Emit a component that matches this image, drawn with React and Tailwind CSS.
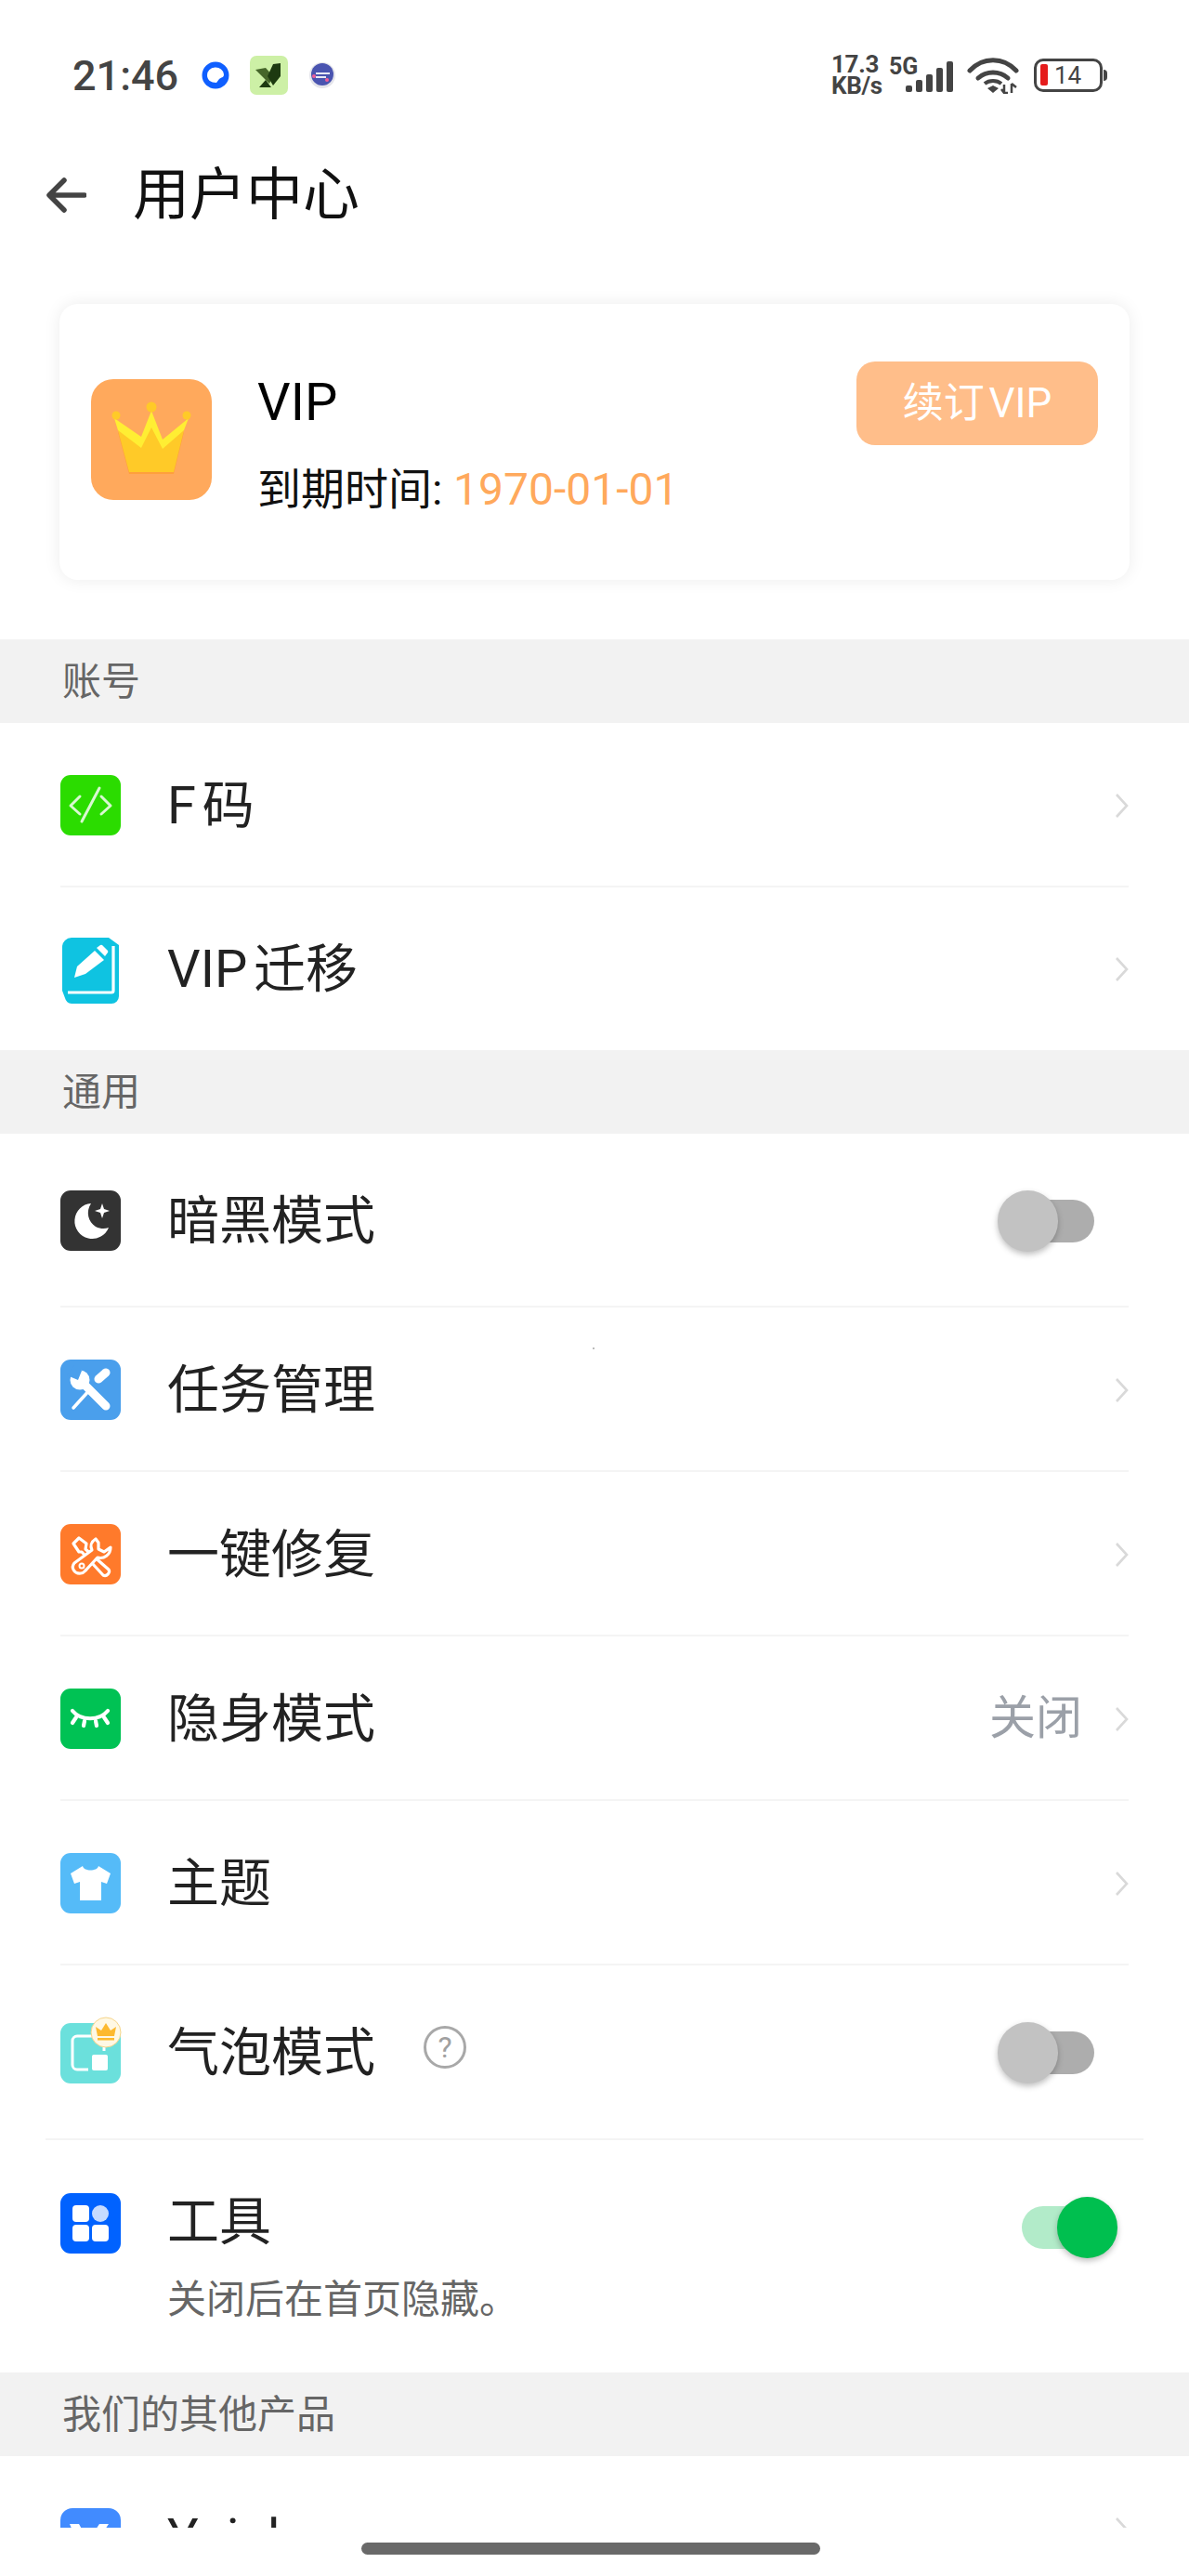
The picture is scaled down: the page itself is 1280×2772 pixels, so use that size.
import React from 'react';

const FONT = 'font-["Roboto","Noto_Sans_CJK_SC",sans-serif]';

const Chevron = () => (
    <svg width="15" height="30" viewBox="0 0 15 30" fill="none" className="shrink-0">
        <path d="M2 3l11 12L2 27" stroke="#d9d9d9" strokeWidth="2.6" />
    </svg>
);

const Toggle = ({ on }) => (
    <div className="relative w-[130px] h-[66px] shrink-0">
        {on ? (
            <>
                <div className="absolute left-[1px] top-[10px] w-[90px] h-[46px] rounded-full bg-[#b2ebc9]" />
                <div className="absolute left-[39px] top-0 w-[65px] h-[66px] rounded-full bg-[#00bf4f] shadow-[0_3px_6px_rgba(0,0,0,0.25)]" />
            </>
        ) : (
            <>
                <div className="absolute left-[24px] top-[10px] w-[80px] h-[46px] rounded-full bg-[#adadad]" />
                <div className="absolute left-0 top-0 w-[65px] h-[66px] rounded-full bg-[#c2c2c2] shadow-[0_3px_6px_rgba(0,0,0,0.25)]" />
            </>
        )}
    </div>
);

const Tile = ({ color, children }) => (
    <svg width="65" height="65" viewBox="0 0 65 65" className="shrink-0">
        <rect width="65" height="65" rx="11" fill={color} />
        {children}
    </svg>
);

const CodeIcon = () => (
    <Tile color="#2bdc00">
        <path d="M21 23L11 33l10 9M44 23l10 10-10 9M42 14L23 50" fill="none" stroke="#d8f8d0" strokeWidth="3" strokeLinecap="round" strokeLinejoin="round" />
    </Tile>
);

const BookIcon = () => (
    <svg width="65" height="71" viewBox="0 0 65 71" className="shrink-0 mt-[4px]">
        <path d="M12 0h40l11 8v55a8 8 0 0 1-8 8H12a8 8 0 0 1-7-6l-3-8V10A10 10 0 0 1 12 0z" fill="#0fc3e1" />
        <path d="M57 9v48a2 2 0 0 1-2 2H8" fill="none" stroke="#fff" strokeWidth="3.2" />
        <path d="M15 43l3-12 19-17 10 10-20 15z" fill="#fff" />
        <path d="M39 11l4-3a2 2 0 0 1 2 0l6 6a2 2 0 0 1 0 2l-3 4z" fill="#fff" />
    </svg>
);

const MoonIcon = () => (
    <Tile color="#333333">
        <path d="M33 14a19 19 0 1 0 19 26c-4 1.500-9 1.500-14-1-8-5-11-16-5-25z" fill="#fff" />
        <path d="M45 14l2 6 6 2-6 2-2 6-2-6-6-2 6-2z" fill="#fff" />
    </Tile>
);

const WrenchBlueIcon = () => (
    <Tile color="#4a9fec">
        <path d="M25 26L49 50" stroke="#fff" strokeWidth="9" strokeLinecap="round" />
        <circle cx="21" cy="22" r="10.500" fill="#fff" />
        <path d="M7 17l12 5 4-10-7-7z" fill="#4a9fec" />
        <path d="M41 21L49 14" stroke="#fff" strokeWidth="9" strokeLinecap="round" />
        <path d="M33 31L14 52" stroke="#fff" strokeWidth="3.500" strokeLinecap="round" />
    </Tile>
);

const RepairIcon = () => (
    <Tile color="#ff7a2b">
        <g fill="none" stroke="#fff" strokeWidth="3.2" strokeLinejoin="round">
            <path d="M14 21l6-6 8 6-1 6 25 22c2 3-2 8-6 6L23 30l-3 0z" />
            <path d="M38 16c-5 3-6 8-4 12L15 42c-4 5 0 12 7 11 3 0 4-2 6-4l12-13c7 2 14-3 14-11l-7 5-6-3v-7z" fill="#ff7a2b" />
            <circle cx="23" cy="45" r="2.500" strokeWidth="2" />
        </g>
    </Tile>
);

const EyeIcon = () => (
    <Tile color="#00c254">
        <g fill="none" stroke="#fff" strokeWidth="4.200" strokeLinecap="round">
            <path d="M13 24c9 11 29 11 38 0" />
            <path d="M13 37l4-6M25 40l1-5M39 40l-1-5M51 37l-4-6" />
        </g>
    </Tile>
);

const ShirtIcon = () => (
    <Tile color="#55bbf8">
        <path d="M24 14l-13 8 4 11 6-2v20h23V31l6 2 4-11-13-8c-1 6-16 6-17 0z" fill="#fff" />
    </Tile>
);

const BubbleIcon = () => (
    <div className="relative w-[65px] h-[65px] shrink-0">
        <svg width="65" height="65" viewBox="0 0 65 65">
            <rect width="65" height="65" rx="11" fill="#6be0dc" />
            <path d="M36 14H18a5 5 0 0 0-5 5v26a5 5 0 0 0 5 5h12" fill="none" stroke="#fff" strokeWidth="3" />
            <rect x="34" y="34" width="17" height="17" rx="2" fill="#fff" />
            <path d="M47 24v6" stroke="#fff" strokeWidth="3" />
        </svg>
        <svg width="34" height="34" viewBox="0 0 34 34" className="absolute left-[32px] top-[-7px]">
            <circle cx="17" cy="17" r="16" fill="#fff8e4" stroke="#f6d58a" strokeWidth="1" />
            <path d="M8 21L6 11l6 4 5-8 5 8 6-4-2 10z" fill="#fdb92f" />
            <rect x="8" y="23" width="18" height="2.500" fill="#fdb92f" />
        </svg>
    </div>
);

const AppsIcon = () => (
    <Tile color="#0062ff">
        <rect x="13" y="13" width="18" height="18" rx="4" fill="#fff" />
        <circle cx="43" cy="22" r="9" fill="#c6dbff" />
        <rect x="13" y="34" width="18" height="18" rx="4" fill="#fff" />
        <rect x="34" y="34" width="18" height="18" rx="4" fill="#fff" />
    </Tile>
);

const YoinkIcon = () => (
    <svg width="65" height="65" viewBox="0 0 65 65" className="shrink-0">
        <rect width="65" height="65" rx="13" fill="#418bff" />
        <path d="M10 17h10l10 18 12-18h10L30 50h-6z" fill="#fff" />
    </svg>
);

const CrownIcon = () => (
    <svg width="130" height="130" viewBox="0 0 130 130" className="shrink-0 -mt-[5px]">
        <rect width="130" height="130" rx="24" fill="#ffa95c" />
        <path d="M29 57l12 45h48l11-45-23 18-12-23-11 22z" fill="#ffa03c" />
        <path d="M29 55l12 45h48l11-45-23 18-12-23-11 22z" fill="#ffca28" />
        <path d="M25 42l29 20 11-28 12 31 28-23-5 13-23 20-12-23-11 22-25-19z" fill="#ffee33" />
        <circle cx="65" cy="30" r="5.500" fill="#ffca28" />
        <circle cx="27" cy="39" r="4.500" fill="#ffca28" />
        <circle cx="103" cy="39" r="4.500" fill="#ffca28" />
    </svg>
);

const StatusBar = () => (
    <div className="h-[162px] flex items-center pl-[78px] pr-[93px] text-[#444]">
        <span className="text-[45px] leading-none w-[133px] font-medium">21:46</span>
        <svg width="41" height="42" viewBox="0 0 41 42" className="shrink-0">
            <circle cx="21" cy="21" r="14.500" fill="#0f5fff" />
            <path d="M12 21a9 8 0 0 1 18-1c0 4-3 3-5 5l-3 4c-6 0-10-3-10-8z" fill="#fff" />
        </svg>
        <svg width="41" height="42" viewBox="0 0 41 42" className="shrink-0 ml-[17px]">
            <rect width="41" height="42" rx="7" fill="#cdf0a6" />
            <path d="M6 15l11-2 8 9-4 8z" fill="#46662a" />
            <path d="M25 9l8-1v14l-8 10-6-10z" fill="#1d3a10" />
            <path d="M10 34l7-8 6 8z" fill="#1d3a10" />
        </svg>
        <svg width="41" height="42" viewBox="0 0 41 42" className="shrink-0 ml-[17px]">
            <circle cx="20" cy="21" r="14" fill="#e4e4ea" />
            <circle cx="20" cy="20" r="12" fill="#4a54b0" />
            <path d="M13 19h15M13 23h11" stroke="#e9e9f5" strokeWidth="1.800" />
            <circle cx="11" cy="22" r="2" fill="#ee5d9a" />
            <circle cx="25" cy="26" r="2" fill="#ee5d9a" />
        </svg>
        <div className="ml-auto flex items-center">
            <div className="text-[26px] leading-[23px] font-bold w-[62px] tracking-[-0.3px]">
                <div>17.3</div>
                <div>KB/s</div>
            </div>
            <div className="relative w-[71px] h-[40px] shrink-0">
                <span className="absolute left-0 top-[1px] text-[25px] leading-[20px] font-bold">5G</span>
                <svg width="71" height="40" viewBox="0 0 71 40" className="absolute left-0 top-0">
                    <rect x="18" y="31" width="7" height="7" rx="2" fill="#444" />
                    <rect x="29" y="25" width="7" height="13" rx="2" fill="#444" />
                    <rect x="40" y="19" width="7" height="19" rx="2" fill="#444" />
                    <rect x="51" y="12" width="7" height="26" rx="2" fill="#444" />
                    <rect x="62" y="5" width="7" height="33" rx="2" fill="#444" />
                </svg>
            </div>
            <svg width="56" height="40" viewBox="0 0 56 40" className="shrink-0 ml-[13px]">
                <g fill="none" stroke="#444" strokeWidth="5" strokeLinecap="round">
                    <path d="M3 15c14-15 36-15 50 0" />
                    <path d="M12 23c9-8 23-8 32 0" />
                </g>
                <path d="M19 29c5-4 13-4 18 0" fill="none" stroke="#444" strokeWidth="4" />
                <path d="M22 34l6-3 6 3-6 5z" fill="#444" />
                <path d="M40 30v9M44 39l-4 0-3-4M48 39v-10M48 29l5 4" fill="none" stroke="#444" strokeWidth="2.500" />
            </svg>
            <div className="relative ml-[16px] w-[74px] h-[36px] rounded-[10px] border-[3.5px] border-[#444] shrink-0">
                <div className="absolute left-[4px] top-[2.500px] w-[8px] h-[23px] rounded-[2px] bg-[#e51c1c]" />
                <span className="absolute left-[19px] top-[1px] text-[26px] leading-[28px]">14</span>
                <div className="absolute left-[72px] top-[9px] w-[4px] h-[12px] rounded-r-full bg-[#444]" />
            </div>
        </div>
    </div>
);

const SectionBar = ({ title }) => (
    <div className="h-[90px] bg-[#f2f2f2] flex items-center pl-[67px] text-[42px] text-[#666]">{title}</div>
);

const Row = ({ icon, title, height, value, right, wide, divider = true }) => (
    <div className={`${height} relative flex items-center pl-[65px] pr-[65px]`}>
        {icon}
        <span className="absolute left-[180px] text-[56px] leading-none text-[#222] [word-spacing:-7px]">{title}</span>
        <div className="ml-auto flex items-center">
            {value && <span className="text-[50px] text-[#9ba0a8] mr-[35px]">{value}</span>}
            {right}
        </div>
        {divider && <div className={`absolute bottom-0 h-[2px] bg-[#f4f4f4] ${wide ? 'left-[49px] right-[49px]' : 'left-[65px] right-[65px]'}`} />}
    </div>
);

const App = () => {
    return (
        <div className={`relative w-[1280px] h-[2772px] overflow-hidden bg-white ${FONT}`}>
            <StatusBar />

            <div className="h-[96px] flex items-center pl-[49px]">
                <svg width="44" height="38" viewBox="0 0 44 38" fill="none" className="shrink-0">
                    <path d="M20 3L4 19l16 16M5 19h37" stroke="#444" strokeWidth="5.500" strokeLinecap="round" strokeLinejoin="round" />
                </svg>
                <h1 className="ml-[50px] text-[61px] leading-none text-[#111] font-normal">用户中心</h1>
            </div>

            <div className="mt-[69px] mx-[64px] h-[297px] rounded-[20px] bg-white shadow-[0_0_18px_rgba(0,0,0,0.08)] flex items-center pl-[34px] pr-[34px]">
                <CrownIcon />
                <div className="ml-[49px] mt-[5px]">
                    <div className="text-[56px] leading-[64px] text-black">VIP</div>
                    <div className="text-[47px] leading-[56px] mt-[34px] text-[#111] whitespace-nowrap">
                        到期时间: <span className="text-[#ffa95c] text-[48px]">1970-01-01</span>
                    </div>
                </div>
                <button className="ml-auto w-[260px] h-[90px] -mt-[84px] rounded-[20px] bg-[#ffbe8a] text-white text-[44px] leading-none [word-spacing:-6px]">
                    续订 VIP
                </button>
            </div>

            <div className="mt-[64px]">
                <SectionBar title="账号" />
                <Row height="h-[177px]" icon={<CodeIcon />} title="F 码" right={<Chevron />} />
                <Row height="h-[175px]" icon={<BookIcon />} title="VIP 迁移" right={<Chevron />} divider={false} />
                <SectionBar title="通用" />
                <Row height="h-[187px]" icon={<MoonIcon />} title="暗黑模式" right={<div className="mr-[11px]"><Toggle /></div>} />
                <Row height="h-[177px]" icon={<WrenchBlueIcon />} title="任务管理" right={<Chevron />} />
                <Row height="h-[177px]" icon={<RepairIcon />} title="一键修复" right={<Chevron />} />
                <Row height="h-[177px]" icon={<EyeIcon />} title="隐身模式" value="关闭" right={<Chevron />} />
                <Row height="h-[177px]" icon={<ShirtIcon />} title="主题" right={<Chevron />} />
                <Row
                    height="h-[188px]"
                    icon={<BubbleIcon />}
                    title="气泡模式"
                    right={
                        <>
                            <svg width="46" height="46" viewBox="0 0 46 46" fill="none" className="absolute left-[456px] top-[65px]">
                                <circle cx="23" cy="23" r="21.500" stroke="#a8a8a8" strokeWidth="3" />
                                <text x="23" y="34" textAnchor="middle" fontSize="32" fill="#a0a0a0">?</text>
                            </svg>
                            <div className="mr-[11px]"><Toggle /></div>
                        </>
                    }
                    wide
                />
                <div className="h-[250px] relative pl-[65px]">
                    <div className="pt-[57px]"><AppsIcon /></div>
                    <span className="absolute left-[180px] top-[60px] text-[56px] leading-none text-[#222]">工具</span>
                    <span className="absolute left-[180px] top-[151px] text-[42px] leading-none text-[#666]">关闭后在首页隐藏。</span>
                    <div className="absolute left-[1099px] top-[61px]"><Toggle on /></div>
                </div>
                <SectionBar title="我们的其他产品" />
                <Row height="h-[176px]" icon={<YoinkIcon />} title="Yoink" right={<div className="-mt-[18px]"><Chevron /></div>} divider={false} />
            </div>

            {/* speck in the list and the gesture bar on top of it */}
            <div className="absolute left-[638px] top-[1450px] w-[2px] h-[2px] bg-[#bbbbbb]" />
            <div className="absolute left-0 right-0 bottom-0 h-[52px] bg-white">
                <div className="absolute left-[389px] top-[16px] w-[494px] h-[13px] rounded-full bg-[#696969]" />
            </div>
        </div>
    );
};

export default App;
